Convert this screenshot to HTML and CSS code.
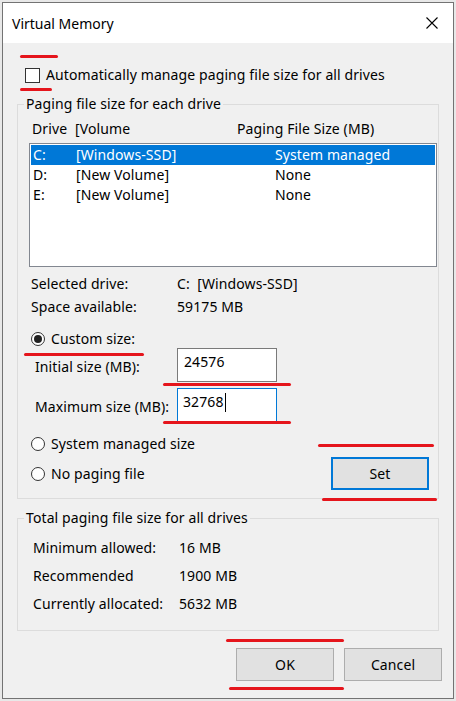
FILE: index.html
```html
<!DOCTYPE html>
<html>
<head>
<meta charset="utf-8">
<title>Virtual Memory</title>
<link rel="stylesheet" href="styles.css">
</head>
<body>
<div class="window">
  <div class="titlebar">
    <span class="title">Virtual Memory</span>
    <svg class="close" width="12" height="12" viewBox="0 0 12 12"><path d="M0.5 0.5 L11.5 11.5 M11.5 0.5 L0.5 11.5" stroke="#000" stroke-width="1.1" fill="none"/></svg>
  </div>
  <div class="content">
    <div class="check-row"><span class="checkbox"></span><span>Automatically manage paging file size for all drives</span></div>

    <fieldset class="group g1">
      <legend>Paging file size for each drive</legend>
      <div class="cols">
        <span class="h-drive">Drive</span><span class="h-vol">[Volume</span><span>Paging File Size (MB)</span>
      </div>
      <div class="listbox">
        <div class="lrow sel"><span class="l-drive">C:</span><span class="l-vol">[Windows-SSD]</span><span>System managed</span></div>
        <div class="lrow"><span class="l-drive">D:</span><span class="l-vol">[New Volume]</span><span>None</span></div>
        <div class="lrow"><span class="l-drive">E:</span><span class="l-vol">[New Volume]</span><span>None</span></div>
      </div>
      <div class="info first"><span class="k">Selected drive:</span><span>C:&nbsp; [Windows-SSD]</span></div>
      <div class="info"><span class="k">Space available:</span><span>59175 MB</span></div>

      <div class="opt custom"><span class="radio on"></span><span>Custom size:</span></div>
      <div class="field first-field"><span class="flabel">Initial size (MB):</span><div class="edit">24576</div></div>
      <div class="field second-field"><span class="flabel">Maximum size (MB):</span><div class="edit focus">32768<span class="caret"></span></div></div>
      <div class="opt sysman"><span class="radio"></span><span>System managed size</span></div>
      <div class="opt-set">
        <div class="opt-inline"><span class="radio"></span><span>No paging file</span></div>
        <div class="btn set">Set</div>
      </div>
    </fieldset>

    <fieldset class="group g2">
      <legend>Total paging file size for all drives</legend>
      <div class="trow first"><span class="tk">Minimum allowed:</span><span>16 MB</span></div>
      <div class="trow"><span class="tk">Recommended</span><span>1900 MB</span></div>
      <div class="trow"><span class="tk">Currently allocated:</span><span>5632 MB</span></div>
    </fieldset>

    <div class="buttons">
      <div class="btn">OK</div>
      <div class="btn">Cancel</div>
    </div>
  </div>
</div>

<span class="mark" style="left:20px;top:55px;width:38px"></span>
<span class="mark" style="left:20px;top:88px;width:32px"></span>
<span class="mark" style="left:24px;top:353px;width:120px"></span>
<span class="mark" style="left:163px;top:383px;width:128px"></span>
<span class="mark" style="left:163px;top:421px;width:128px"></span>
<span class="mark" style="left:318px;top:444px;width:116px"></span>
<span class="mark" style="left:322px;top:498px;width:115px"></span>
<span class="mark" style="left:226px;top:639px;width:118px"></span>
<span class="mark" style="left:229px;top:687px;width:115px"></span>
</body>
</html>
```

FILE: styles.css
```css
* { box-sizing: border-box; }
html, body { margin: 0; padding: 0; }
body {
  background: #e8e8e8;
  font-family: "Noto Sans", "Open Sans", sans-serif;
  font-size: 14px;
  letter-spacing: 0.1px;
  color: #000;
  position: relative;
  width: 456px;
  height: 701px;
  overflow: hidden;
}
.window {
  margin: 2px 0 0 2px;
  width: 452px;
  height: 697px;
  border: 1px solid #737373;
  background: #f0f0f0;
  display: flex;
  flex-direction: column;
}
.titlebar {
  height: 40px;
  background: #fff;
  display: flex;
  align-items: center;
  justify-content: space-between;
  padding: 0 15px 0 9px;
}
.title { font-size: 14px; letter-spacing: 0; line-height: 20px; margin-top: 1px; }
.close { display: block; }
.content {
  flex: 1;
  display: flex;
  flex-direction: column;
  padding: 0 14px;
}
.check-row {
  margin-top: 22px;
  height: 20px;
  display: flex;
  align-items: center;
  padding-left: 8px;
  line-height: 20px;
}
.checkbox {
  width: 15px; height: 15px;
  border: 1px solid #333;
  background: #fff;
  margin-right: 6px;
}
.group {
  margin: 0;
  padding: 0;
  min-width: 0;
  border: 1px solid #dcdcdc;
}
.group legend {
  padding: 0 2px;
  margin-left: 6px;
  line-height: 20px;
  font-size: 14px;
}
.g1 { margin-top: 9px; padding-bottom: 8px; }
.cols {
  margin-top: 5px;
  height: 20px;
  line-height: 20px;
  display: flex;
  padding-left: 14px;
}
.h-drive { width: 43px; }
.h-vol { width: 162px; }
.listbox {
  margin: 4px 1px 0 11px;
  height: 124px;
  border: 1px solid #828790;
  background: #fff;
  padding: 1px 0 0 1px;
}
.lrow {
  height: 20px;
  line-height: 20px;
  display: flex;
  padding-left: 2px;
  margin-right: 1px;
}
.lrow.sel { background: #0078d7; color: #fff; }
.l-drive { width: 43px; }
.l-vol { width: 199px; }
.info {
  height: 20px;
  line-height: 20px;
  display: flex;
  padding-left: 13px;
  margin-top: 3px;
}
.info.first { margin-top: 7px; }
.k { width: 146px; }
.opt {
  display: flex;
  align-items: center;
  padding-left: 13px;
}
.custom { margin-top: 13px; height: 18px; line-height: 18px; }
.radio {
  width: 14px; height: 14px;
  border: 1px solid #333;
  border-radius: 50%;
  background: #fff;
  margin-right: 6px;
  display: flex;
  align-items: center;
  justify-content: center;
  flex: none;
}
.radio.on::after {
  content: "";
  width: 8px; height: 8px;
  border-radius: 50%;
  background: #222;
}
.field {
  display: flex;
  align-items: flex-start;
  height: 34px;
  padding-left: 17px;
}
.second-field { margin-top: 6px; }
.flabel { width: 142px; margin-top: 9px; line-height: 20px; }
.edit {
  width: 100px;
  height: 34px;
  border: 1px solid #7a7a7a;
  background: #fff;
  padding: 3px 0 0 6px;
  line-height: 20px;
  display: flex;
  align-items: flex-start;
}
.edit.focus { border-color: #0078d7; padding-left: 5px; }
.caret {
  width: 1px;
  height: 19px;
  background: #000;
  margin-left: 1px;
  margin-top: 1px;
}
.sysman { margin-top: 12px; height: 20px; line-height: 20px; }
.opt-set {
  margin-top: 3px;
  display: flex;
  align-items: center;
  justify-content: space-between;
  padding-left: 13px;
  padding-right: 9px;
  height: 33px;
}
.opt-inline { display: flex; align-items: center; line-height: 20px; }
.btn {
  width: 98px;
  height: 33px;
  background: #e1e1e1;
  border: 1px solid #adadad;
  display: flex;
  align-items: center;
  justify-content: center;
}
.btn.set { border: 2px solid #0078d7; }
.g2 { margin-top: 9px; padding-bottom: 16px; }
.trow {
  height: 20px;
  line-height: 20px;
  display: flex;
  padding-left: 15px;
  margin-top: 8px;
}
.trow.first { margin-top: 10px; }
.tk { width: 146px; }
.buttons {
  margin-top: 17px;
  display: flex;
  justify-content: flex-end;
  gap: 10px;
  margin-right: -3px;
}
.mark {
  position: absolute;
  height: 3px;
  border-radius: 2px;
  background: #e5151c;
}
```
